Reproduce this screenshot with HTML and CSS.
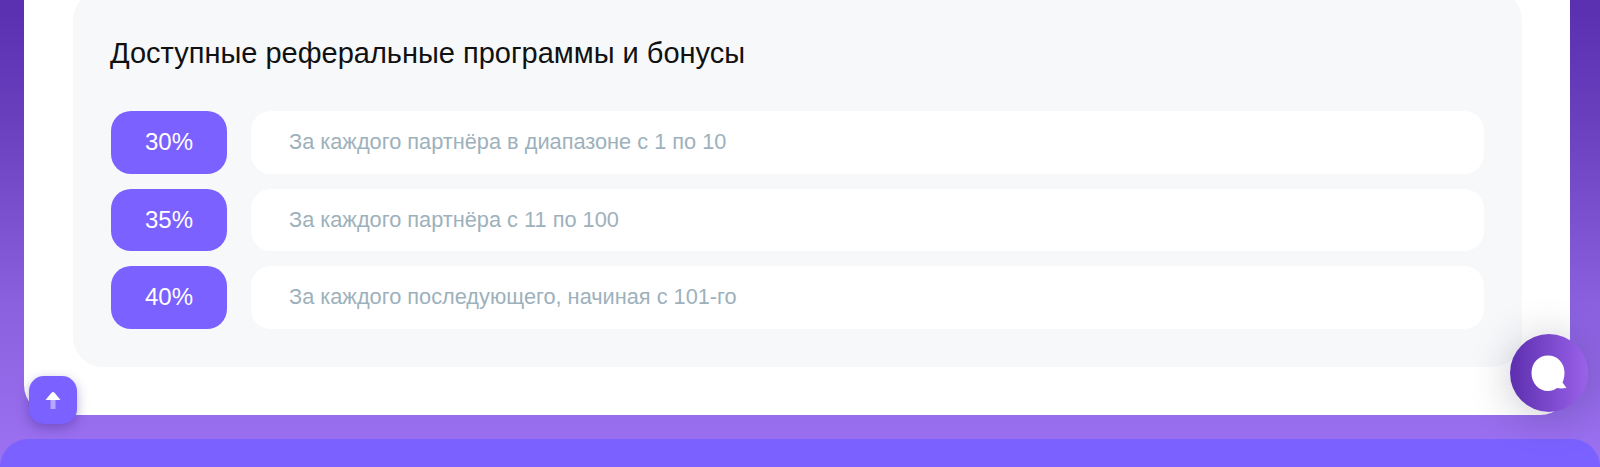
FILE: index.html
```html
<!DOCTYPE html>
<html lang="ru">
<head>
  <meta charset="UTF-8">
  <title>Реферальные программы</title>
  <link rel="stylesheet" href="styles.css">
</head>
<body>
  <div class="page">
    <main class="main-card">
      <section class="bonus-block">
        <h2 class="bonus-title">Доступные реферальные программы и бонусы</h2>
        <div class="bonus-list">
          <div class="bonus-row">
            <div class="bonus-percent">30%</div>
            <div class="bonus-text">За каждого партнёра в диапазоне с 1 по 10</div>
          </div>
          <div class="bonus-row">
            <div class="bonus-percent">35%</div>
            <div class="bonus-text">За каждого партнёра с 11 по 100</div>
          </div>
          <div class="bonus-row">
            <div class="bonus-percent">40%</div>
            <div class="bonus-text">За каждого последующего, начиная с 101-го</div>
          </div>
        </div>
      </section>
    </main>
    <footer class="footer"></footer>
  </div>

  <button class="scroll-top" type="button" aria-label="Наверх">
    <svg width="16" height="17" viewBox="0 0 16 17">
      <rect x="5.5" y="8" width="5" height="9" fill="#fff" opacity="0.45"/>
      <path d="M8 0 C8.500 0 9 0.300 9.500 0.800 L15.500 8 L0.500 8 L6.500 0.800 C7 0.300 7.500 0 8 0 Z" fill="#fff"/>
    </svg>
  </button>

  <button class="chat-btn" type="button" aria-label="Чат">
    <svg width="36" height="37" viewBox="0 0 36 37">
      <path d="M17 0.500 C26.500 0.500 33.500 8 33.500 17.500 C33.500 21.500 32.700 25 31.500 27.500 L35.500 33 L30 33.500 L26 33 C23.500 34.800 20.500 36 17 36 C7.500 36 0.500 28 0.500 18 C0.500 8 7.500 0.500 17 0.500 Z" fill="#fff"/>
    </svg>
  </button>
</body>
</html>
```
FILE: styles.css
```css
html, body {
  margin: 0;
  height: 100%;
}

body {
  font-family: "Liberation Sans", Arial, sans-serif;
  background: linear-gradient(180deg, #5a2fb0 0%, #6a3fbe 25%, #8a60df 65%, #9c72f2 100%);
  overflow: hidden;
}

.page {
  display: flex;
  flex-direction: column;
  height: 467px;
}

.main-card {
  margin: -40px 30px 0 24px;
  padding: 30px 48px 48px 49px;
  height: 455px;
  box-sizing: border-box;
  background: #fff;
  border-radius: 0 0 30px 30px;
  flex-shrink: 0;
}

.bonus-block {
  box-sizing: border-box;
  height: 377px;
  padding: 43px 38px 38px 37px;
  background: #f6f8fa;
  border-radius: 30px;
}

.bonus-title {
  margin: 0 0 38px;
  font-size: 29px;
  line-height: 40px;
  font-weight: 400;
  color: #111;
}

.bonus-list {
  display: flex;
  flex-direction: column;
  gap: 15px;
}

.bonus-row {
  display: flex;
  gap: 24px;
  height: 62.500px;
  margin-left: 1px;
}

.bonus-percent {
  width: 116px;
  display: flex;
  align-items: center;
  justify-content: center;
  background: #7b61ff;
  border-radius: 20px;
  color: #fff;
  font-size: 24px;
}

.bonus-text {
  flex: 1;
  display: flex;
  align-items: center;
  padding-left: 38px;
  background: #fff;
  border-radius: 20px;
  color: #9db1bc;
  font-size: 21.750px;
}

.footer {
  flex: 1;
  margin-top: 24px;
  background: #7b61ff;
  border-radius: 30px 30px 0 0;
}

.scroll-top {
  position: fixed;
  left: 29px;
  top: 376px;
  width: 48px;
  height: 48px;
  padding: 0;
  display: flex;
  align-items: center;
  justify-content: center;
  border: none;
  border-radius: 15px;
  background: #7b61ff;
  box-shadow: 0 4px 12px rgba(50, 30, 120, 0.35);
}

.chat-btn {
  position: fixed;
  left: 1510px;
  top: 334px;
  width: 78px;
  height: 78px;
  padding: 0;
  display: flex;
  align-items: center;
  justify-content: center;
  border: none;
  border-radius: 50%;
  background: linear-gradient(90deg, #5c2fae 0%, #9a62ea 100%);
  box-shadow: 0 4px 40px rgba(40, 30, 60, 0.25);
}
```
